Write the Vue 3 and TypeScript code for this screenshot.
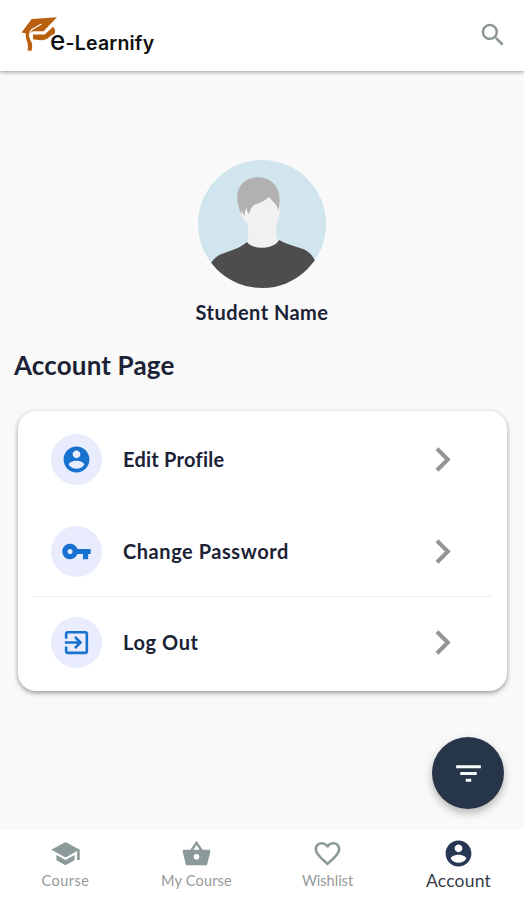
<script setup lang="ts">
interface Entry {
  id: string
  label: string
  path: string
}

const person =
  'M12 2C6.48 2 2 6.48 2 12s4.48 10 10 10 10-4.48 10-10S17.52 2 12 2zm0 3c1.66 0 3 1.34 3 3s-1.34 3-3 3-3-1.34-3-3 1.34-3 3-3zm0 14.2c-2.5 0-4.71-1.28-6-3.22.03-1.99 4-3.08 6-3.08 1.99 0 5.97 1.09 6 3.08-1.29 1.94-3.5 3.22-6 3.22z'

const rows: Entry[] = [
  { id: 'edit', label: 'Edit Profile', path: person },
  {
    id: 'password',
    label: 'Change Password',
    path: 'M12.65 10C11.83 7.67 9.61 6 7 6c-3.31 0-6 2.69-6 6s2.69 6 6 6c2.61 0 4.83-1.67 5.65-4H17v4h4v-4h2v-4H12.65zM7 14c-1.1 0-2-.9-2-2s.9-2 2-2 2 .9 2 2-.9 2-2 2z',
  },
  {
    id: 'logout',
    label: 'Log Out',
    path: 'M10.09 15.59L11.5 17l5-5-5-5-1.41 1.41L12.67 11H3v2h9.67l-2.58 2.59zM19 3H5c-1.11 0-2 .9-2 2v4h2V5h14v14H5v-4H3v4c0 1.1.89 2 2 2h14c1.1 0 2-.9 2-2V5c0-1.1-.9-2-2-2z',
  },
]

const tabs: Entry[] = [
  {
    id: 'course',
    label: 'Course',
    path: 'M5 13.18v4L12 21l7-3.82v-4L12 17l-7-3.82zM12 3L1 9l11 6 9-4.91V17h2V9L12 3z',
  },
  {
    id: 'mine',
    label: 'My Course',
    path: 'M12 2.2L7.200 9H1.400v2L3.900 21h16.200l2.500-10V9h-5.800L12 2.200zm0 3.300L14.400 9H9.600L12 5.500zM12 12.300a2.200 2.200 0 1 1 0 4.400 2.200 2.200 0 0 1 0-4.400z',
  },
  {
    id: 'wishlist',
    label: 'Wishlist',
    path: 'M16.5 3c-1.74 0-3.41.81-4.5 2.09C10.91 3.81 9.24 3 7.5 3 4.42 3 2 5.42 2 8.5c0 3.78 3.4 6.86 8.55 11.54L12 21.35l1.45-1.32C18.6 15.36 22 12.28 22 8.5 22 5.42 19.58 3 16.5 3zm-4.400 15.550l-.1.1-.1-.1C7.140 14.240 4 11.390 4 8.500 4 6.500 5.500 5 7.500 5c1.540 0 3.040.99 3.570 2.360h1.870C13.460 5.990 14.960 5 16.500 5c2 0 3.500 1.500 3.500 3.500 0 2.890-3.140 5.740-7.900 10.050z',
  },
  { id: 'account', label: 'Account', path: person },
]

const activeTab = 'account'
</script>

<template>
  <div class="screen">
    <header class="topbar">
      <div class="brand">
        <svg class="cap" viewBox="0 0 36 36" width="36" height="36">
          <path fill="#b85f10" d="M0.500 15.500L10.700 2 36 0.300 22.500 14.300 12 14.300 8 17z" />
          <path fill="#b85f10" d="M12 17.600L23.800 17.600 32 9.700C34.500 12 34.500 15 33.500 17 29.500 18 28.500 21 24.500 22.500 20 24 15.500 22.500 12 22.500z" />
          <path fill="#b85f10" d="M5 15L8.500 15.500C7.500 20 9 22 10.500 25 11.500 28 11.500 31 10.300 34L6.500 33.500C7.500 29 6.800 26 5.500 23 4.800 20 4.500 18 5 15z" />
          <path fill="none" stroke="#fff" stroke-width="1.200" stroke-linecap="round" d="M20 7.200L11 12.500C8.500 14.500 8.500 18 10 22" />
        </svg>
        <span class="brand-name"><span class="brand-e">e</span>-Learnify</span>
      </div>
      <svg class="search" viewBox="0 0 24 24" width="30" height="30">
        <path d="M15.500 14h-.79l-.28-.27C15.410 12.590 16 11.110 16 9.500 16 5.910 13.090 3 9.500 3S3 5.910 3 9.500 5.910 16 9.500 16c1.610 0 3.090-.59 4.230-1.570l.27.28v.79l5 4.990L20.490 19l-4.990-5zm-6 0C7.010 14 5 11.990 5 9.500S7.010 5 9.500 5 14 7.010 14 9.500 11.990 14 9.500 14z" />
      </svg>
    </header>

    <main class="content">
      <section class="profile">
        <svg class="avatar" viewBox="0 0 128 128" width="128" height="128">
          <defs>
            <clipPath id="avatar-clip"><circle cx="64" cy="64" r="64" /></clipPath>
          </defs>
          <g clip-path="url(#avatar-clip)">
            <rect width="128" height="128" fill="#d0e5ed" />
            <path fill="#f1f1f1" d="M42 40C40 52 45 59 49 63C50.500 70 51 76 49 85L65 94 82 85C78 78 77.500 71 79 62C82 57 83 50 81.500 38L70 26 50 30z" />
            <path fill="#4d4d4d" d="M10 110C14 98 20 95 29 92C37 89.500 43 87 49 82C54 90 76 90 81 80C88 84 97 86 105 89C112 92 115 96 120 106L118 128H8z" />
            <path fill="#b1b1b1" d="M43.500 55C39 44 36.500 32 44 24C50 16 66 15 74 22C82 29 83 40 80.500 51C79 44 75 42 71 37C67 41 62 43 56 45C52 48 52.500 51 51 54C49.500 52 49 51 48.500 48C47 50 46.500 53 47 56C45 54 44 51 43.500 49z" />
          </g>
        </svg>
        <p class="student">Student Name</p>
      </section>

      <h1 class="title">Account Page</h1>

      <ul class="card">
        <li v-for="row in rows" :key="row.id" class="row">
          <span class="badge">
            <svg viewBox="0 0 24 24" width="31" height="31"><path :d="row.path" /></svg>
          </span>
          <span class="row-label" :class="row.id">{{ row.label }}</span>
          <svg class="chevron" viewBox="0 0 24 24" width="49" height="49">
            <path d="M10 6L8.590 7.410 13.170 12l-4.580 4.590L10 18l6-6z" />
          </svg>
        </li>
      </ul>
    </main>

    <button class="fab" type="button">
      <svg viewBox="0 0 24 24" width="33" height="33">
        <path d="M10 18h4v-2.200h-4v2.200zM3 6v2.200h18V6H3zm3 7.100h12v-2.200H6v2.200z" />
      </svg>
    </button>

    <nav class="tabs">
      <a v-for="tab in tabs" :key="tab.id" class="tab" :class="[tab.id, { active: tab.id === activeTab }]">
        <svg viewBox="0 0 24 24" width="31" height="31"><path fill-rule="evenodd" :d="tab.path" /></svg>
        <span class="tab-label">{{ tab.label }}</span>
      </a>
    </nav>
  </div>
</template>

<style>
body {
  background: #f9f9f9;
}
</style>

<style scoped>
.screen {
  position: relative;
  display: flex;
  flex-direction: column;
  height: 900px;
  overflow: hidden;
  background: #f9f9f9;
  color: #1c2236;
  font-family: Lato, "Liberation Sans", sans-serif;
}
svg {
  display: block;
  flex: none;
  fill: currentColor;
}
.topbar {
  display: flex;
  flex: none;
  justify-content: space-between;
  align-items: flex-start;
  box-sizing: border-box;
  height: 71px;
  padding: 17px 16px 0 21px;
  background: #fff;
  box-shadow: 0 1px 4px rgba(0, 0, 0, 0.4);
}
.brand {
  display: flex;
}
.brand-name {
  margin: 12px 0 0 -7px;
  color: #111;
  font: 600 19.5px/28px Inter, sans-serif;
  letter-spacing: 0.2px;
  white-space: nowrap;
}
.brand-e {
  font-size: 26px;
  font-weight: 500;
  line-height: 20px;
}
.search {
  margin: 3px 0 0;
  color: #8c9694;
}
.content {
  flex: 1;
}
.profile {
  display: flex;
  flex-direction: column;
  align-items: center;
  padding-top: 88.500px;
}
.student {
  margin: 11.500px 0 0;
  font-size: 20px;
  font-weight: 700;
  line-height: 26px;
  letter-spacing: 0.45px;
}
.title {
  margin: 23px 0 0 14px;
  font-size: 26px;
  font-weight: 700;
  line-height: 34px;
  letter-spacing: 0.15px;
}
.card {
  margin: 29px 17px 0 18px;
  padding: 3px 14px 2px;
  list-style: none;
  border-radius: 18px;
  background: #fff;
  box-shadow: 0 2px 5px rgba(0, 0, 0, 0.4);
}
.row {
  display: flex;
  align-items: center;
  box-sizing: border-box;
  height: 91.700px;
  padding: 0 26px 1px 19px;
}
.row:last-child {
  border-top: 1px solid #eeefef;
  margin-top: -1px;
  height: 92.700px;
}
.badge {
  display: grid;
  place-items: center;
  width: 51px;
  height: 51px;
  border-radius: 50%;
  background: #e8ecfc;
  color: #1671cf;
}
.row-label {
  margin: -1px 0 0 21px;
  font-size: 20px;
  font-weight: 700;
  line-height: 26px;
}
.edit {
  letter-spacing: 0.25px;
}
.password {
  letter-spacing: 0.55px;
}
.logout {
  letter-spacing: 0.6px;
}
.chevron {
  margin-left: auto;
  color: #959595;
}
.fab {
  position: absolute;
  top: 737px;
  left: 432px;
  display: grid;
  place-items: center;
  width: 72px;
  height: 72px;
  padding: 0;
  border: 0;
  border-radius: 50%;
  background: #273549;
  color: #f5fafc;
  box-shadow: 0 4px 8px rgba(0, 0, 0, 0.28);
}
.tabs {
  display: grid;
  flex: none;
  grid-template-columns: repeat(4, 1fr);
  height: 70px;
  background: #fff;
}
.tab {
  display: flex;
  flex-direction: column;
  align-items: center;
  padding-top: 8px;
  color: #8b9a98;
}
.tab-label {
  margin-top: 1px;
  color: #949a99;
  font-size: 14.500px;
  line-height: 22px;
  letter-spacing: 0.2px;
  white-space: nowrap;
}
.course .tab-label {
  letter-spacing: 0.5px;
}
.wishlist .tab-label {
  letter-spacing: 0;
}
.tab.active {
  color: #273754;
}
.active .tab-label {
  color: #363c49;
  font-size: 17.500px;
}
</style>
